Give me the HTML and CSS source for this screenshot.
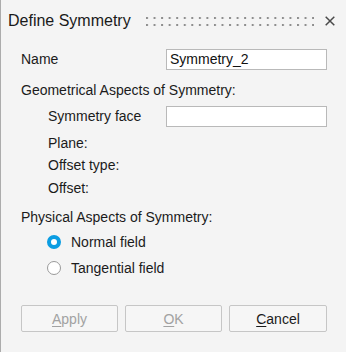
FILE: index.html
```html
<!DOCTYPE html>
<html lang="en">
<head>
  <meta charset="UTF-8">
  <title>Define Symmetry</title>
  <link rel="stylesheet" href="styles.css">
</head>
<body>
  <div class="dialog">
    <!-- Title bar -->
    <div class="titlebar">
      <span class="title">Define Symmetry</span>
      <svg class="grip" width="168" height="9" viewBox="0 0 168 9">
        <defs>
          <pattern id="dots" width="7.55" height="7" patternUnits="userSpaceOnUse">
            <rect width="2" height="2" fill="#8e8e8e"/>
          </pattern>
        </defs>
        <rect width="168" height="9" fill="url(#dots)"/>
      </svg>
      <svg class="close" width="10" height="10" viewBox="0 0 10 10">
        <path d="M0.7 0.7 L9.3 9.3 M9.3 0.7 L0.7 9.3" stroke="#4a4a4a" stroke-width="1.5" fill="none"/>
      </svg>
    </div>

    <!-- Form -->
    <div class="form">
      <div class="row row-name">
        <span class="label">Name</span>
        <input class="field" type="text" value="Symmetry_2">
      </div>

      <div class="line section geo">Geometrical Aspects of Symmetry:</div>

      <div class="row sub face">
        <span class="label">Symmetry face</span>
        <input class="field" type="text" value="">
      </div>
      <div class="line sub plane">Plane:</div>
      <div class="line sub otype">Offset type:</div>
      <div class="line sub offset">Offset:</div>

      <div class="line section phys">Physical Aspects of Symmetry:</div>

      <div class="line radio normal">
        <span class="dot checked"></span>Normal field
      </div>
      <div class="line radio tangent">
        <span class="dot"></span>Tangential field
      </div>

      <div class="buttons">
        <button class="btn" disabled><u>A</u>pply</button>
        <button class="btn" disabled><u>O</u>K</button>
        <button class="btn"><u>C</u>ancel</button>
      </div>
    </div>
  </div>
</body>
</html>
```

FILE: styles.css
```css
* {
  box-sizing: border-box;
}

body {
  margin: 0;
  background: #f4f4f4;
}

.dialog {
  width: 346px;
  height: 352px;
  border-left: 1px solid #acacac;
  background: #f4f4f4;
  color: #1b1b1b;
  font-family: "Liberation Sans", Arial, sans-serif;
  font-size: 14px;
}

/* Title bar */
.titlebar {
  display: flex;
  align-items: center;
  height: 42px;
  padding: 0 11px 0 7px;
}

.title {
  font-size: 16px;
  line-height: 20px;
  color: #1a1a1a;
}

.grip {
  display: block;
  margin-left: auto;
  margin-right: 11px;
  margin-top: 1px;
}

.close {
  display: block;
}

/* Form */
.form {
  padding: 0 19px 0 20px;
}

.row {
  display: flex;
  align-items: center;
  height: 22px;
}

.row .label {
  flex: 1;
}

.line {
  display: flex;
  align-items: center;
  height: 20px;
}

.sub {
  padding-left: 27px;
}

.field {
  width: 161px;
  height: 21px;
  margin: 0;
  padding: 0 3px;
  border: 1px solid #b9b9b9;
  background: #fff;
  color: #111;
  font-family: "Liberation Sans", Arial, sans-serif;
  font-size: 14px;
  outline: none;
}

.row-name { margin-top: 6px; }
.geo { margin-top: 10px; }
.face { margin-top: 5px; }
.plane { margin-top: 6px; }
.otype { margin-top: 2px; }
.offset { margin-top: 3px; }
.phys { margin-top: 9px; }
.normal { margin-top: 5px; }
.tangent { margin-top: 6px; }

/* Radio buttons */
.radio {
  padding-left: 26px;
}

.dot {
  width: 14px;
  height: 14px;
  margin-right: 10px;
  border: 1px solid #9a9a9a;
  border-radius: 50%;
  background: #fff;
}

.dot.checked {
  border: 4.5px solid #0b9de2;
  background: #fff;
}

/* Buttons */
.buttons {
  display: flex;
  gap: 7px;
  margin-top: 27px;
}

.btn {
  width: 97px;
  height: 27px;
  padding: 0;
  border: 1px solid #c6c6c6;
  border-radius: 2px;
  background: #f6f6f6;
  color: #1b1b1b;
  font-family: "Liberation Sans", Arial, sans-serif;
  font-size: 14px;
}

.btn:last-child {
  width: 98px;
}

.btn:disabled {
  color: #a2a2a2;
}

.btn u {
  text-decoration-thickness: 1px;
  text-underline-offset: 2px;
}
```
